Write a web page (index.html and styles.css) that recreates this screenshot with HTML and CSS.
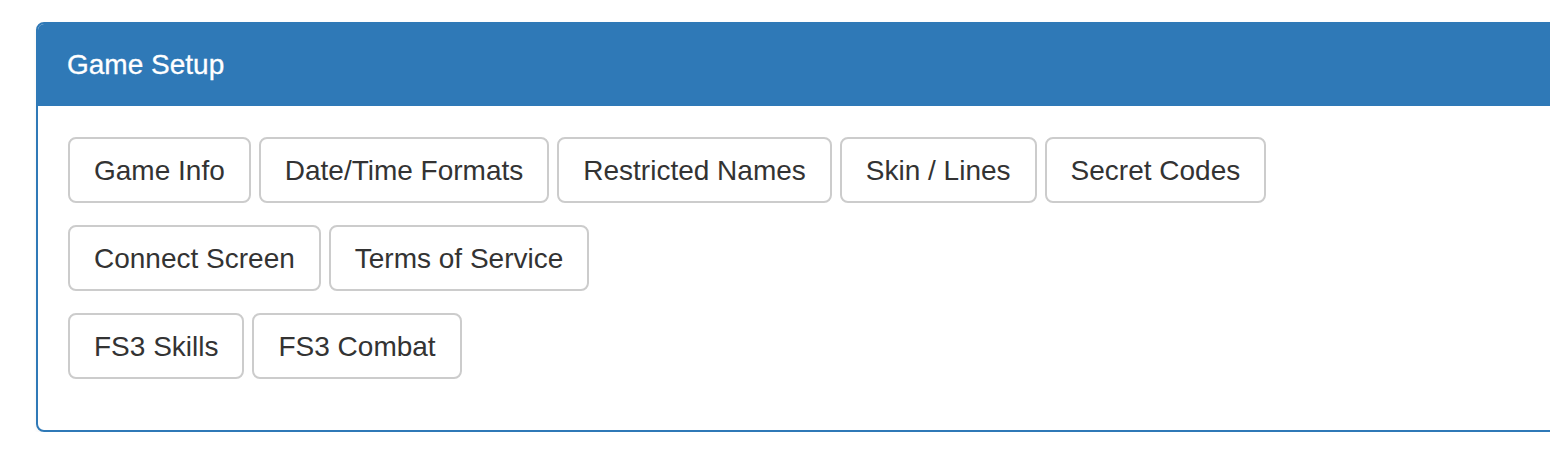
FILE: index.html
```html
<!DOCTYPE html>
<html>
<head>
<meta charset="utf-8">
<link rel="stylesheet" href="styles.css">
</head>
<body>
<div class="panel">
  <div class="panel-heading">Game Setup</div>
  <div class="panel-body">
    <div class="btn-row">
      <span class="btn">Game Info</span>
      <span class="btn">Date/Time Formats</span>
      <span class="btn">Restricted Names</span>
      <span class="btn">Skin / Lines</span>
      <span class="btn">Secret Codes</span>
    </div>
    <div class="btn-row">
      <span class="btn">Connect Screen</span>
      <span class="btn">Terms of Service</span>
    </div>
    <div class="btn-row">
      <span class="btn">FS3 Skills</span>
      <span class="btn">FS3 Combat</span>
    </div>
  </div>
</div>
</body>
</html>
```
FILE: styles.css
```css
html, body {
  margin: 0;
  padding: 0;
  overflow: hidden;
  background: #fff;
}
body {
  padding: 22px 0 0 36px;
  font-family: "Liberation Sans", Arial, Helvetica, sans-serif;
  color: #333;
}
.panel {
  width: 1560px;
  border: 2px solid #2f79b7;
  border-radius: 8px;
  box-shadow: 0 2px 4px rgba(0,0,0,0.05);
  overflow: hidden;
}
.panel-heading {
  background: #2f79b7;
  color: #fff;
  font-size: 28px;
  line-height: 42px;
  padding: 20px 29px 20px;
  -webkit-text-stroke: 0.3px #fff;
}
.panel-body {
  padding: 31px 30px 51px;
  display: flex;
  flex-direction: column;
  gap: 22px;
}
.btn-row {
  display: flex;
  gap: 8px;
}
.btn {
  display: inline-block;
  border: 2px solid #ccc;
  border-radius: 8px;
  background: #fff;
  font-size: 28px;
  line-height: 38px;
  padding: 13px 24px 11px 24px;
  color: #333;
  white-space: nowrap;
}
```
